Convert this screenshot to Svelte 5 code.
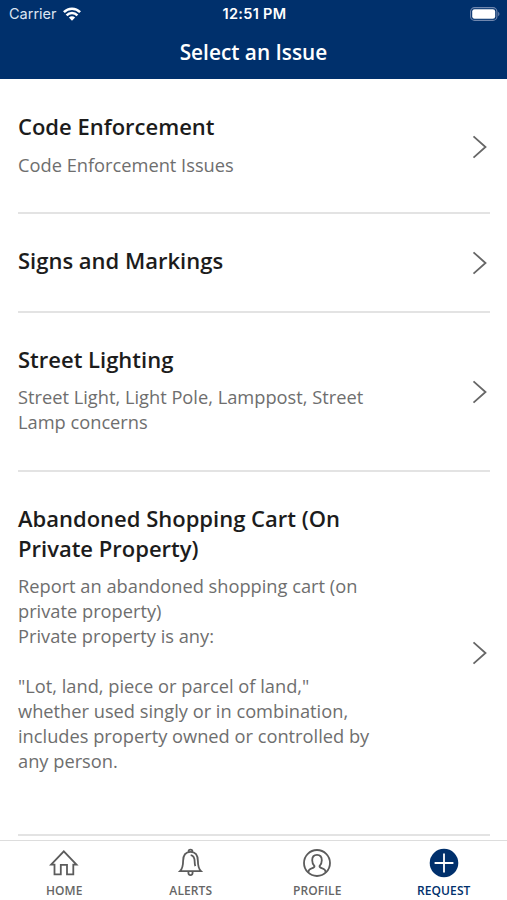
<script>
  const issues = [
    { title: 'Code Enforcement', text: 'Code Enforcement Issues' },
    { title: 'Signs and Markings', text: '' },
    { title: 'Street Lighting', text: 'Street Light, Light Pole, Lamppost, Street Lamp concerns' },
    {
      title: 'Abandoned Shopping Cart (On Private Property)',
      text: 'Report an abandoned shopping cart (on private property)\nPrivate property is any:\n\n"Lot, land, piece or parcel of land," whether used singly or in combination, includes property owned or controlled by any person.\n\n'
    }
  ];
  const tabs = ['home', 'alerts', 'profile', 'request'];
  let active = 'request';
</script>

<div class="screen">
  <header>
    <div class="status">
      <span class="carrier">Carrier
        <svg width="18" height="14" viewBox="0 0 18 14" aria-hidden="true">
          <g fill="none" stroke="#fff" stroke-width="2.5">
            <path d="M.9 5.1C5.4.5 12.6.5 17.1 5.1" />
            <path d="M3.6 8.3c3-3.1 7.8-3.1 10.8 0" />
          </g>
          <path d="M5.9 10.6c1.8-1.7 4.4-1.7 6.2 0L9 13.8z" fill="#fff" />
        </svg>
      </span>
      <span class="time">12:51 PM</span>
      <svg class="battery" width="30" height="14" viewBox="0 0 30 14" aria-hidden="true">
        <rect x=".6" y=".6" width="26.3" height="12.8" rx="4" fill="none" stroke="#7087ae" stroke-width="1.1" />
        <rect x="2.2" y="2.2" width="23" height="9.6" rx="2.3" fill="#fff" />
        <path d="M28.2 4.8c1.7.8 1.7 3.6 0 4.4z" fill="#7087ae" />
      </svg>
    </div>
    <h1>Select an Issue</h1>
  </header>

  <main>
    {#each issues as issue}
      <div class="row">
        <div class="copy">
          <h2>{issue.title}</h2>
          {#if issue.text}<p>{issue.text}</p>{/if}
        </div>
        <svg width="16" height="24" viewBox="0 0 16 24" aria-hidden="true"><path d="M1.5 1.3 13.5 12 1.5 22.7" /></svg>
      </div>
    {/each}
  </main>

  <nav>
    {#each tabs as tab}
      <button class:on={active === tab} on:click={() => (active = tab)}>
        <svg width="30" height="30" viewBox="0 0 30 30" aria-hidden="true">
          {#if tab === 'home'}
            <path d="M2.1 16.6 14.8 3.3l12.7 13.3h-3.2v9.8H18v-9.6h-6.2v9.6H5.5v-9.8z" />
          {:else if tab === 'alerts'}
            <path d="M4 23.2c2.3-2.3 3.1-5 3.1-10.2 0-5.7 2.6-9.2 7.4-9.2s7.4 3.5 7.4 9.2c0 5.2.8 7.9 3.1 10.2zM12.5 3.8c0-2.8 4-2.8 4 0M12.3 23.4c0 5 4.4 5 4.4 0M14.7 7.2c2.8.5 4 2.8 4 6.8 0 1.8.2 3.1.6 4.1" />
          {:else if tab === 'profile'}
            <circle cx="15" cy="15" r="13" />
            <path d="M6.2 24.4c.3-2.4 1.5-3.5 3.5-4 2-.4 2.8-.9 2.8-2.3-1.5-1.3-2.3-3.4-2.3-5.8 0-3.5 1.7-5.5 4.8-5.5s4.8 2 4.8 5.5c0 2.4-.8 4.5-2.3 5.8 0 1.4.8 1.9 2.8 2.3 2 .5 3.2 1.6 3.5 4" />
          {:else}
            <circle class="disc" cx="15" cy="15" r="14.3" />
            <path class="plus" d="M15 5.6v18.8M5.6 15h18.8" />
          {/if}
        </svg>
        <span>{tab}</span>
      </button>
    {/each}
  </nav>
</div>

<style>
  :global(body) { background: #fff; }
  .screen { height: 900px; display: flex; flex-direction: column; overflow: hidden; background: #fff; font-family: "Open Sans", sans-serif; }
  header { flex: none; height: 79px; background: #00306c; color: #fff; }
  .status { display: grid; grid-template-columns: 1fr auto 1fr; align-items: center; height: 27px; padding: 0 7px 0 9px; font-family: Inter, sans-serif; font-size: 14.5px; }
  .carrier { display: flex; align-items: center; gap: 6px; color: #dce5f2; }
  .time { font-weight: 600; font-size: 14.5px; letter-spacing: 0.3px; }
  .battery { justify-self: end; }
  h1 { margin: 0; text-align: center; font-size: 20.8px; line-height: 50px; font-weight: 600; }
  main { flex: 1; min-height: 0; overflow: hidden; padding: 1.2px 17px 0 18px; }
  .row { display: flex; align-items: center; justify-content: space-between; padding: 31px 2px 35.9px 0; border-bottom: 2px solid #e3e3e3; }
  .copy { width: 360px; }
  h2 { margin: 0; font-size: 22px; line-height: 30px; font-weight: 600; color: #1c1c1c; }
  p { margin: 10.5px 0 -0.5px; font-size: 18.25px; line-height: 25px; color: #6e6e6e; white-space: pre-wrap; }
  .row svg { fill: none; stroke: #666; stroke-width: 1.8; margin-top: 6px; }
  nav { flex: none; display: grid; grid-template-columns: repeat(4, 1fr); height: 59px; border-top: 1px solid #ddd; background: #fff; padding-left: 1px; }
  button { display: flex; flex-direction: column; align-items: center; border: 0; padding: 7px 0 0; background: none; color: #666; font: 600 12px/18px "Open Sans", sans-serif; letter-spacing: 0.1px; text-transform: uppercase; }
  button svg { fill: none; stroke: #5c5c5c; stroke-width: 1.8; }
  button span { margin-top: 4px; }
  button.on { color: #00306c; }
  .disc { fill: #00306c; stroke: none; }
  .plus { stroke: #fff; }
</style>
